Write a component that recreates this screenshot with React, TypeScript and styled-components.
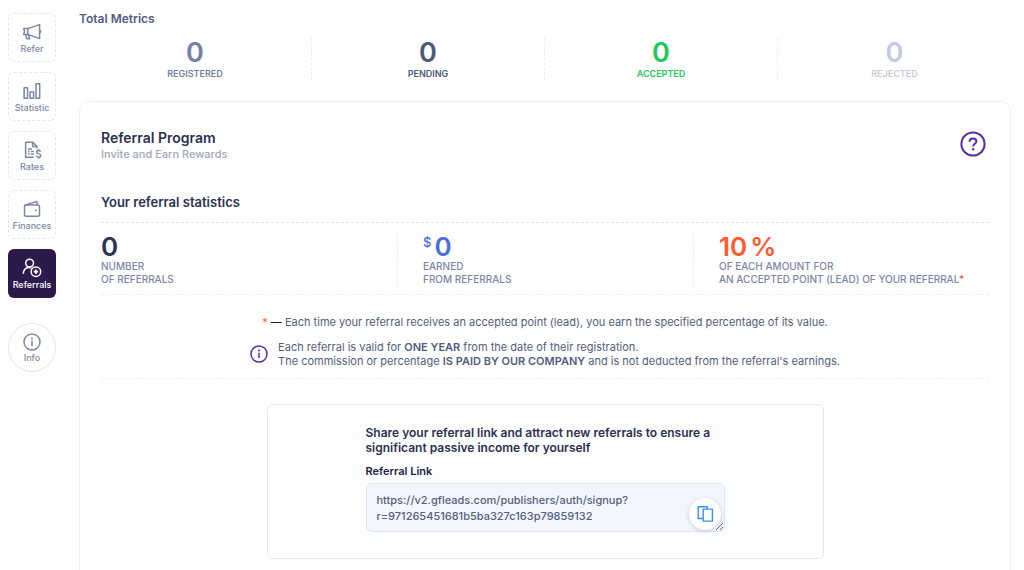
import React from 'react';
import styled, { createGlobalStyle } from 'styled-components';

const GlobalStyle = createGlobalStyle`
  *, *::before, *::after { box-sizing: border-box; }
  html { scrollbar-width: none; }
  body {
    margin: 0;
    background: #fff;
    color: #2b3152;
    font-family: Inter, "Liberation Sans", sans-serif;
    font-size: 11px;
  }
  h1, h2, h3, p { margin: 0; font-weight: 600; }
  svg { display: block; fill: none; }
`;

const Page = styled.div`
  display: flex;
  align-items: flex-start;
`;

const Sidebar = styled.nav`
  flex: none;
  display: flex;
  flex-direction: column;
  gap: 10px;
  padding: 13px 23px 13px 8px;
`;

const NavItem = styled.a<{ $active?: boolean; $round?: boolean }>`
  display: flex;
  flex-direction: column;
  align-items: center;
  justify-content: center;
  gap: 1px;
  width: 48px;
  height: 49px;
  padding-top: 1px;
  border: 1px ${p => (p.$round ? 'solid' : 'dashed')} ${p => (p.$active ? '#2c1a4d' : '#e6e7ee')};
  border-radius: ${p => (p.$round ? '50%' : '6px')};
  margin-top: ${p => (p.$round ? '15px' : '0')};
  background: ${p => (p.$active ? '#2c1a4d' : '#fff')};
  color: ${p => (p.$active ? '#fff' : '#7c86a8')};
  font-size: 9px;
  font-weight: 500;
  line-height: 12px;
  text-decoration: none;
`;

const Main = styled.main`
  flex: 1;
  min-width: 0;
  padding: 10px 13px 20px 0;
`;

const PageTitle = styled.h1`
  color: #515d82;
  font-size: 12px;
  line-height: 18px;
`;

const Metrics = styled.section`
  display: grid;
  grid-template-columns: repeat(4, 1fr);
  margin-top: 10px;
`;

const Metric = styled.div<{ $color: string }>`
  color: ${p => p.$color};
  text-align: center;
  &:not(:last-child) { border-right: 1px dashed #ececf1; }
`;

const BigNumber = styled.div`
  font-size: 27px;
  font-weight: 600;
  line-height: 30px;
`;

const MetricLabel = styled.div`
  font-size: 9px;
  font-weight: 600;
  line-height: 12px;
`;

const Card = styled.section`
  margin-top: 21px;
  padding: 26px 21px;
  border: 1px solid #f0f0f3;
  border-radius: 10px;
`;

const CardHeader = styled.header`
  display: flex;
  align-items: center;
  justify-content: space-between;
  padding-right: 3px;
`;

const CardTitle = styled.h2`
  font-size: 14px;
  line-height: 20px;
`;

const CardSubtitle = styled.p`
  color: #9fa6c0;
  font-size: 11px;
  font-weight: 500;
  line-height: 12px;
`;

const HelpButton = styled.button`
  padding: 0;
  border: 0;
  background: none;
  color: #5a2ea6;
  cursor: pointer;
`;

const SectionTitle = styled.h3`
  margin: 33px 0 11px;
  font-size: 13px;
  line-height: 18px;
`;

const Stats = styled.div`
  display: grid;
  grid-template-columns: repeat(3, 1fr);
  padding: 10px 0 8px;
  border-top: 1px dashed #e2e3e8;
  border-bottom: 1px dashed #efeff3;
`;

const Stat = styled.div`
  & + & {
    padding-left: 25px;
    border-left: 1px dashed #ececf1;
  }
`;

const StatValue = styled.div<{ $color: string }>`
  display: flex;
  align-items: flex-start;
  gap: 3px;
  color: ${p => p.$color};
  font-size: 26px;
  font-weight: 600;
  line-height: 27px;
`;

const Currency = styled.span`
  font-size: 13px;
  font-weight: 500;
  line-height: 18px;
`;

const StatLabel = styled.div`
  color: #7d86a6;
  font-size: 10px;
  font-weight: 500;
  line-height: 13px;
  white-space: nowrap;
`;

const Star = styled.span`
  color: #ff5a2b;
`;

const Dash = styled.span`
  color: #22252f;
`;

const Notes = styled.div`
  display: flex;
  flex-direction: column;
  align-items: center;
  gap: 11px;
  padding: 20px 0 10px;
  border-bottom: 1px dashed #f1f1f4;
  color: #525d7e;
  font-size: 11px;
  line-height: 14px;
`;

const Note = styled.p`
  font-weight: 400;
  strong { font-weight: 600; }
`;

const InfoNote = styled.div`
  display: flex;
  align-items: center;
  gap: 10px;
  svg { color: #5a2ea6; }
`;

const ShareBox = styled.section`
  max-width: 557px;
  margin: 25px auto 0;
  padding: 20px 98px 26px;
  border: 1px solid #e6e8ef;
  border-radius: 6px;
  background: #fdfdfe;
`;

const ShareTitle = styled.h3`
  font-size: 12px;
  line-height: 15px;
`;

const LinkLabel = styled.label`
  display: block;
  margin: 9px 0 5px;
  color: #1c2145;
  font-size: 11px;
  font-weight: 600;
  line-height: 14px;
`;

const LinkField = styled.div`
  position: relative;
`;

const LinkInput = styled.textarea`
  display: block;
  width: 100%;
  height: 49px;
  padding: 8px 10px;
  border: 1px solid #dfe4f0;
  border-radius: 6px;
  outline: none;
  overflow: hidden;
  background: #f3f6fe;
  color: #55607f;
  font-family: inherit;
  font-size: 11px;
  font-weight: 500;
  line-height: 16px;
`;

const CopyButton = styled.button`
  position: absolute;
  right: 4px;
  bottom: 2px;
  display: flex;
  align-items: center;
  justify-content: center;
  width: 32px;
  height: 32px;
  padding: 0;
  border: 0;
  border-radius: 50%;
  background: #fff;
  box-shadow: 0 1px 4px rgba(40, 50, 90, 0.22);
  color: #3b8ff3;
  cursor: pointer;
`;

const Icon = ({ size = 20, children }: { size?: number; children: React.ReactNode }) => (
  <svg
    width={size}
    height={size}
    viewBox={`0 0 ${size} ${size}`}
    stroke="currentColor"
    strokeWidth="1.5"
    strokeLinejoin="round"
    aria-hidden="true"
  >
    {children}
  </svg>
);

const MegaphoneIcon = () => (
  <Icon>
    <path d="M1.6 6.6h4.2v5.8H1.6l1-2.9zM5.8 6.6 17.6 2.6v14L5.8 12.4M17.6 8.2c1.5.2 1.5 2.6 0 2.8M3.4 12.4l1.5 4.3h2.8L6.5 12.6" />
  </Icon>
);

const ChartIcon = () => (
  <Icon>
    <path d="M2.1 6.8h3.5v10.4H2.1zM8.1 11h3.5v6.2H8.1zM14 2.7h3.7v14.5H14z" />
  </Icon>
);

const RatesIcon = () => (
  <Icon>
    <path d="M11.8 17.3H3.6V2.2h7.2l4 4v2.4M10.6 2.2v4.2h4.2M6 8.9h4M6 11.5h1.6M9 11.5h2.8M6 14.1h1.6M9 14.1h2.8" />
    <path d="M18.6 11.8c-.3-.9-1-1.3-2-1.3-1.1 0-1.9.6-1.9 1.6 0 2.3 4.1 1.2 4.1 3.5 0 1-.9 1.6-2.1 1.6-1.1 0-1.9-.5-2.2-1.4M16.6 9v1.5M16.6 17.2v1.6" />
  </Icon>
);

const WalletIcon = () => (
  <Icon>
    <rect x="2.5" y="6" width="15" height="11.2" rx="1.5" />
    <path d="M2.8 6.3 14.2 2.6c.5-.1.8.1.8.6V6" />
    <circle cx="14" cy="11.3" r=".9" fill="currentColor" stroke="none" />
  </Icon>
);

const ReferralIcon = () => (
  <Icon>
    <circle cx="7.6" cy="5.1" r="3.9" />
    <path d="M1.3 15.8c0-3.7 2.3-6.4 5.3-6.4 1 0 1.8.2 2.5.6" />
    <circle cx="13.9" cy="13.7" r="4.8" />
    <path strokeWidth="1.7" d="M13.9 11.4v4.6M11.6 13.7h4.6" />
  </Icon>
);

const InfoIcon = () => (
  <Icon size={18}>
    <circle cx="9" cy="9" r="8" />
    <path d="M9 7.7v5.2" />
    <circle cx="9" cy="5.5" r="1" fill="currentColor" stroke="none" />
  </Icon>
);

const HelpIcon = () => (
  <svg width="26" height="26" viewBox="0 0 26 26" stroke="currentColor" strokeWidth="2" aria-hidden="true">
    <circle cx="13" cy="13" r="11.6" />
    <path d="M9.6 10.7c0-2 1.4-3.3 3.4-3.3s3.4 1.2 3.4 3c0 2.4-3.3 2.5-3.3 5.2" />
    <circle cx="13.1" cy="18.3" r="1.2" fill="currentColor" stroke="none" />
  </svg>
);

const CopyIcon = () => (
  <svg width="18" height="18" viewBox="0 0 18 18" stroke="currentColor" strokeWidth="1.4" aria-hidden="true">
    <path d="M6.7 13.5H2.2V1.7h9v2.4M7.2 4.1h9.2v12H7.2z" />
  </svg>
);

const navItems = [
  { label: 'Refer', icon: <MegaphoneIcon /> },
  { label: 'Statistic', icon: <ChartIcon /> },
  { label: 'Rates', icon: <RatesIcon /> },
  { label: 'Finances', icon: <WalletIcon /> },
  { label: 'Referrals', icon: <ReferralIcon />, active: true },
  { label: 'Info', icon: <InfoIcon />, round: true },
];

const metrics = [
  { label: 'REGISTERED', value: 0, color: '#7580a3' },
  { label: 'PENDING', value: 0, color: '#4c587c' },
  { label: 'ACCEPTED', value: 0, color: '#1fc759' },
  { label: 'REJECTED', value: 0, color: '#c5cbde' },
];

export default function App() {
  return (
    <Page>
      <GlobalStyle />
      <Sidebar>
        {navItems.map(item => (
          <NavItem
            key={item.label}
            href="#"
            $active={item.active}
            $round={item.round}
            aria-current={item.active ? 'page' : undefined}
          >
            {item.icon}
            {item.label}
          </NavItem>
        ))}
      </Sidebar>
      <Main>
        <PageTitle>Total Metrics</PageTitle>
        <Metrics>
          {metrics.map(m => (
            <Metric key={m.label} $color={m.color}>
              <BigNumber>{m.value}</BigNumber>
              <MetricLabel>{m.label}</MetricLabel>
            </Metric>
          ))}
        </Metrics>
        <Card>
          <CardHeader>
            <div>
              <CardTitle>Referral Program</CardTitle>
              <CardSubtitle>Invite and Earn Rewards</CardSubtitle>
            </div>
            <HelpButton aria-label="Help">
              <HelpIcon />
            </HelpButton>
          </CardHeader>
          <SectionTitle>Your referral statistics</SectionTitle>
          <Stats>
            <Stat>
              <StatValue $color="#2b3152">0</StatValue>
              <StatLabel>NUMBER<br />OF REFERRALS</StatLabel>
            </Stat>
            <Stat>
              <StatValue $color="#4a6fdc"><Currency>$</Currency>0</StatValue>
              <StatLabel>EARNED<br />FROM REFERRALS</StatLabel>
            </Stat>
            <Stat>
              <StatValue $color="#ff5a2b"><span>10</span> <span>%</span></StatValue>
              <StatLabel>
                OF EACH AMOUNT FOR<br />AN ACCEPTED POINT (LEAD) OF YOUR REFERRAL<Star>*</Star>
              </StatLabel>
            </Stat>
          </Stats>
          <Notes>
            <Note>
              <Star>*</Star> <Dash>—</Dash> Each time your referral receives an accepted point (lead), you earn the
              specified percentage of its value.
            </Note>
            <InfoNote>
              <InfoIcon />
              <Note>
                Each referral is valid for <strong>ONE YEAR</strong> from the date of their registration.
                <br />
                The commission or percentage <strong>IS PAID BY OUR COMPANY</strong> and is not deducted from the
                referral's earnings.
              </Note>
            </InfoNote>
          </Notes>
          <ShareBox>
            <ShareTitle>
              Share your referral link and attract new referrals to ensure a significant passive income for yourself
            </ShareTitle>
            <LinkLabel htmlFor="referral-link">Referral Link</LinkLabel>
            <LinkField>
              <LinkInput
                id="referral-link"
                readOnly
                spellCheck={false}
                value="https://v2.gfleads.com/publishers/auth/signup?r=971265451681b5ba327c163p79859132"
              />
              <CopyButton aria-label="Copy link">
                <CopyIcon />
              </CopyButton>
            </LinkField>
          </ShareBox>
        </Card>
      </Main>
    </Page>
  );
}
